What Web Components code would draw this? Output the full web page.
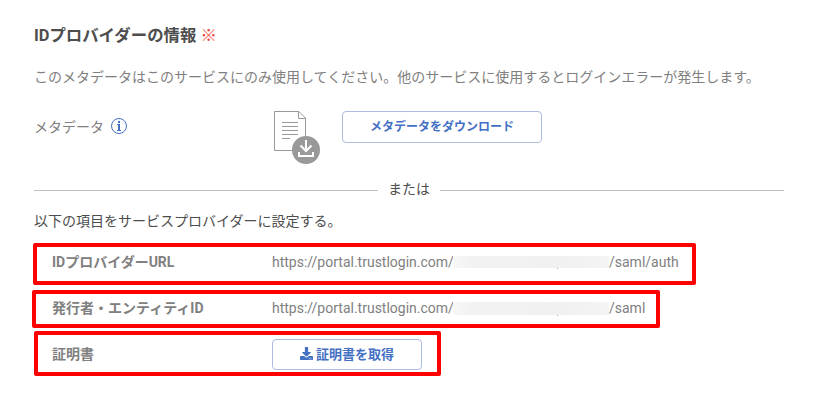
<!DOCTYPE html>
<html lang="ja">
<head>
<meta charset="utf-8">
<title>IDプロバイダーの情報</title>
<style>
  body {
    margin: 0;
    background: #fff;
    font-family: Roboto, "Noto Sans CJK JP", sans-serif;
    font-size: 14px;
    line-height: 20px;
    color: #808080;
  }
</style>
</head>
<body>
<idp-panel>
  <span slot="title">IDプロバイダーの情報</span>
  <span slot="lead">このメタデータはこのサービスにのみ使用してください。他のサービスに使用するとログインエラーが発生します。</span>
  <meta-row slot="metadata">
    <span slot="label">メタデータ</span>
    <outline-button>メタデータをダウンロード</outline-button>
  </meta-row>
  <or-divider slot="divider">または</or-divider>
  <span slot="note">以下の項目をサービスプロバイダーに設定する。</span>
  <marked-row style="--left: 33px; --w: 663px; --h: 42px; --gap: 5px; --pad: 15px; --shift: -4px">
    <span slot="label">IDプロバイダーURL</span>
    <masked-url base="https://portal.trustlogin.com/" path="/saml/auth" style="--mask-h: 12px"></masked-url>
  </marked-row>
  <marked-row style="--left: 32px; --w: 628px; --h: 38px; --gap: 3px; --pad: 16px; --shift: -3px">
    <span slot="label">発行者・エンティティID</span>
    <masked-url base="https://portal.trustlogin.com/" path="/saml" style="--mask-h: 13px; --mask-drop: 2px"></masked-url>
  </marked-row>
  <marked-row style="--left: 34px; --w: 407px; --h: 45px; --pad: 14px; --shift: 1px">
    <span slot="label">証明書</span>
    <outline-button icon style="--btn-w: 150px; --btn-size: 13px; --btn-gap: 3px; --btn-drop: 1px">証明書を取得</outline-button>
  </marked-row>
</idp-panel>

<script>
class IdpPanel extends HTMLElement {
  constructor() {
    super();
    const shadow = this.attachShadow({ mode: 'open' });

    shadow.innerHTML = /* html */`
    <style>
      :host {
        display: block;
        box-sizing: border-box;
        width: 823px;
        height: 419px;
        padding-top: 24px;
        overflow: hidden;
      }

      .head {
        width: 750px;
        margin-left: 34px;
      }

      h2 {
        margin: 0;
        font-size: 16.4px;
        line-height: 24px;
        font-weight: bold;
        color: #4d4d4d;
      }

      .required {
        font-weight: normal;
        color: #f04b3c;
      }

      .lead {
        margin: 19px 0 24px;
      }

      .note {
        margin: 12px 0 12px;
        color: #4d4d4d;
      }

      p {
        white-space: nowrap;
      }
    </style>

    <div class="head">
      <h2><slot name="title"></slot> <span class="required">※</span></h2>
      <p class="lead"><slot name="lead"></slot></p>
      <slot name="metadata"></slot>
      <slot name="divider"></slot>
      <p class="note"><slot name="note"></slot></p>
    </div>
    <slot></slot>
    `;
  }
}

class MetaRow extends HTMLElement {
  constructor() {
    super();
    const shadow = this.attachShadow({ mode: 'open' });

    shadow.innerHTML = /* html */`
    <style>
      :host {
        display: flex;
        align-items: flex-start;
        height: 54px;
      }

      .label {
        display: flex;
        align-items: center;
        gap: 7px;
        width: 239px;
        height: 31px;
      }

      svg {
        flex: none;
        display: block;
      }

      .info {
        margin-top: -1px;
      }

      .file {
        margin-right: 21px;
      }
    </style>

    <div class="label">
      <slot name="label"></slot>
      <svg class="info" width="16" height="16" viewBox="0 0 16 16">
        <circle cx="8" cy="8" r="7.5" fill="none" stroke="#4470c4"/>
        <path d="M7 3h2v2H7zM6 6h3v6h1v1H6v-1h1V7H6z" fill="#4470c4"/>
      </svg>
    </div>
    <svg class="file" width="48" height="54" viewBox="0 0 48 54" fill="none" stroke="#999">
      <path d="M1.500 .5h24.500l6.500 6.500v32.500h-31z"/>
      <path d="M25.500 .5v7h7"/>
      <path d="M9 11.500h16M9 15.500h16M9 19.500h16M9 23.500h16M9 27.500h8"/>
      <circle cx="33" cy="39" r="14" fill="#999" stroke="none"/>
      <path d="M33 29v11M27.500 34.500l5.500 5.500 5.500-5.500M26 41v4h14v-4" stroke="#fff" stroke-width="2"/>
    </svg>
    <slot></slot>
    `;
  }
}

class OutlineButton extends HTMLElement {
  constructor() {
    super();
    const shadow = this.attachShadow({ mode: 'open' });

    shadow.innerHTML = /* html */`
    <style>
      :host {
        display: block;
        width: var(--btn-w, 200px);
      }

      button {
        box-sizing: border-box;
        display: flex;
        align-items: center;
        justify-content: center;
        gap: var(--btn-gap, 0);
        width: 100%;
        height: var(--btn-h, 32px);
        padding: var(--btn-drop, 0) 0 0;
        border: 1px solid #abbce0;
        border-radius: 4px;
        background: #fff;
        color: #4470c4;
        font-family: inherit;
        font-size: var(--btn-size, 12px);
        font-weight: bold;
        line-height: 20px;
      }

      svg {
        margin-top: -2px;
      }
    </style>

    <button type="button">
      ${this.hasAttribute('icon') ? `
      <svg width="13" height="13" viewBox="0 0 512 512" fill="currentColor">
        <path d="M216 0h80c13 0 24 11 24 24v168h88c18 0 27 21 14 34L270 378c-8 8-20 8-28 0L90 226c-13-13-4-34 14-34h88V24c0-13 11-24 24-24zm296 376v112c0 13-11 24-24 24H24c-13 0-24-11-24-24V376c0-13 11-24 24-24h147l49 49c20 20 52 20 72 0l49-49h147c13 0 24 11 24 24zm-124 88a20 20 0 1 0-40 0 20 20 0 1 0 40 0zm64 0a20 20 0 1 0-40 0 20 20 0 1 0 40 0z"/>
      </svg>` : ''}
      <slot></slot>
    </button>
    `;
  }
}

class OrDivider extends HTMLElement {
  constructor() {
    super();
    const shadow = this.attachShadow({ mode: 'open' });

    shadow.innerHTML = /* html */`
    <style>
      :host {
        display: flex;
        align-items: center;
        gap: 10px;
        margin-top: 14px;
        height: 20px;
        color: #4d4d4d;
      }

      i {
        flex: 1;
        height: 1px;
        margin-top: 3px;
        background: #bfbfbf;
      }
    </style>

    <i></i><slot></slot><i></i>
    `;
  }
}

class MarkedRow extends HTMLElement {
  constructor() {
    super();
    const shadow = this.attachShadow({ mode: 'open' });

    shadow.innerHTML = /* html */`
    <style>
      :host {
        --btn-h: 31px;
        display: flex;
        align-items: center;
        box-sizing: border-box;
        width: var(--w);
        height: var(--h);
        margin: 0 0 var(--gap, 0) var(--left);
        padding-left: var(--pad);
        border: 4px solid #f00;
        border-radius: 2px;
        white-space: nowrap;
      }

      .label {
        flex: none;
        width: 220px;
        font-weight: bold;
      }

      .label, .value {
        margin-top: var(--shift, 0);
      }
    </style>

    <div class="label"><slot name="label"></slot></div>
    <div class="value"><slot></slot></div>
    `;
  }
}

class MaskedUrl extends HTMLElement {
  constructor() {
    super();
    const shadow = this.attachShadow({ mode: 'open' });

    shadow.innerHTML = /* html */`
    <style>
      :host {
        display: flex;
        align-items: center;
      }

      .base {
        width: 181px;
      }

      .mask {
        position: relative;
        width: 156px;
        height: var(--mask-h);
        margin-top: var(--mask-drop, 0);
        background: linear-gradient(90deg, #f7f7f7, #f2f2f2 12%, #f2f2f2 40%, #f0f0f0 60%, #f2f2f2 85%, #f5f5f5);
      }

      /* descender left visible under the mask */
      .mask::after {
        content: "";
        position: absolute;
        left: 104px;
        top: 100%;
        width: 1px;
        height: 1px;
        background: #aaa;
      }
    </style>

    <span class="base">${this.getAttribute('base')}</span>
    <span class="mask"></span>
    <span>${this.getAttribute('path')}</span>
    `;
  }
}

customElements.define('idp-panel', IdpPanel);
customElements.define('meta-row', MetaRow);
customElements.define('outline-button', OutlineButton);
customElements.define('or-divider', OrDivider);
customElements.define('marked-row', MarkedRow);
customElements.define('masked-url', MaskedUrl);
</script>
</body>
</html>
